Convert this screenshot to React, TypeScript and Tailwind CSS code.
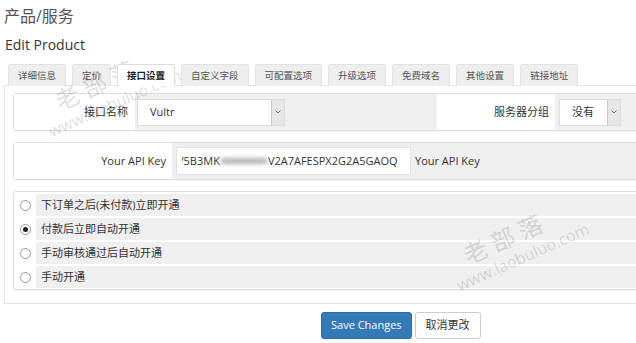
const tabs = [
  "详细信息",
  "定价",
  "接口设置",
  "自定义字段",
  "可配置选项",
  "升级选项",
  "免费域名",
  "其他设置",
  "链接地址",
];

const options = [
  "下订单之后(未付款)立即开通",
  "付款后立即自动开通",
  "手动审核通过后自动开通",
  "手动开通",
];

const Chevron = () => (
  <svg width="6" height="4" viewBox="0 0 6 4">
    <path d="M0.5 0.5 L3 3 L5.5 0.5" fill="none" stroke="#777" strokeWidth="1" />
  </svg>
);

const Select = ({ value, width }: { value: string; width: string }) => (
  <div className={`flex h-[27px] items-stretch border border-[#dcdcdc] bg-white ${width}`}>
    <span className="flex flex-1 items-center pl-[12px]">{value}</span>
    <span className="flex w-[13px] items-center justify-center border-l border-[#c8c8c8] bg-[#e6e6e6]">
      <Chevron />
    </span>
  </div>
);

const Watermark = ({ className }: { className: string }) => (
  <div
    className={`pointer-events-none absolute flex w-[170px] rotate-[-24deg] flex-col items-center text-black/15 ${className}`}
  >
    <span className="pr-[16px] text-[24px] leading-[28px] tracking-[6px]">老部落</span>
    <span className="text-[16px] leading-[20px]">www.laobuluo.com</span>
  </div>
);

export default function App() {
  return (
    <div className="relative h-[343px] w-[636px] overflow-hidden bg-white font-['Open_Sans','Noto_Sans_CJK_SC',sans-serif] text-[11px] text-[#333]">
      <h1 className="mt-[4px] pl-[4px] text-[16px] leading-[24px] text-[#555]">产品/服务</h1>
      <h2 className="mt-[7px] pl-[5px] text-[14px] leading-[20px] text-[#333]">Edit Product</h2>

      <nav className="mt-[9px] flex gap-[6px] pl-[8px]">
        {tabs.map((t) => {
          const active = t === "接口设置";
          return (
            <div
              key={t}
              className={`relative -mb-px h-[22px] rounded-t-[3px] border border-b-0 px-[9px] text-[9.5px] leading-[21px] ${
                active
                  ? "z-10 border-[#ddd] bg-white font-bold text-[#222]"
                  : "border-[#e2e2e2] bg-[#eee] text-[#555]"
              }`}
            >
              {t}
            </div>
          );
        })}
      </nav>

      <div className="ml-[4px] w-[680px] border border-[#e3e3e3] px-[8px] pb-[13px] pt-[7px]">
        <div className="flex h-[38px] items-stretch rounded-[3px] border border-[#dedede] shadow-[0_1px_1px_rgba(0,0,0,0.05)]">
          <div className="flex w-[121px] items-center justify-end bg-white pr-[7px]">接口名称</div>
          <div className="flex w-[302px] items-center bg-[#efefef] pl-[2px]">
            <Select value="Vultr" width="w-[148px]" />
          </div>
          <div className="flex w-[118px] items-center justify-end bg-white pr-[6px]">服务器分组</div>
          <div className="flex flex-1 items-center bg-[#efefef] pl-[4px]">
            <Select value="没有" width="w-[62px]" />
          </div>
        </div>

        <div className="mt-[11px] flex h-[38px] items-stretch rounded-[3px] border border-[#dedede] shadow-[0_1px_1px_rgba(0,0,0,0.05)]">
          <div className="flex w-[158px] items-center justify-end bg-white pr-[6px]">Your API Key</div>
          <div className="flex flex-1 items-center bg-[#efefef] pl-[4px]">
            <div className="flex h-[28px] w-[235px] items-center overflow-hidden border border-[#e2e2e2] bg-white pl-[5px]">
              <div className="flex items-center overflow-hidden whitespace-nowrap">
                <span className="-ml-[5px]">V5B3MK</span>
                <span className="mx-[1px] inline-block h-[6px] w-[46px] bg-[#b5b5b5] blur-[2px]" />
                <span>V2A7AFESPX2G2A5GAOQ</span>
              </div>
            </div>
            <span className="ml-[4px]">Your API Key</span>
          </div>
        </div>

        <div className="mt-[11px] flex flex-col gap-[2px] rounded-[3px] border border-[#dedede] pb-[1px] pt-[2px] shadow-[0_1px_1px_rgba(0,0,0,0.05)]">
          {options.map((o, i) => (
            <div key={o} className="flex h-[22px] items-stretch">
              <div className="flex w-[22px] items-center justify-center">
                <span className="flex h-[11px] w-[11px] items-center justify-center rounded-full border border-[#999] bg-white">
                  {i === 1 && <span className="h-[5px] w-[5px] rounded-full bg-[#222]" />}
                </span>
              </div>
              <div className="flex flex-1 items-center bg-[#efefef] pl-[5px]">{o}</div>
            </div>
          ))}
        </div>
      </div>

      <div className="mt-[8px] flex gap-[3px] pl-[321px]">
        <button className="h-[27px] rounded-[3px] border border-[#2e6da4] bg-[#337ab7] px-[9px] text-white">
          Save Changes
        </button>
        <button className="h-[27px] rounded-[3px] border border-[#ccc] bg-white px-[10px] text-[#333]">
          取消更改
        </button>
      </div>

      <Watermark className="left-[24px] top-[66px]" />
      <Watermark className="left-[432px] top-[220px]" />
    </div>
  );
}
